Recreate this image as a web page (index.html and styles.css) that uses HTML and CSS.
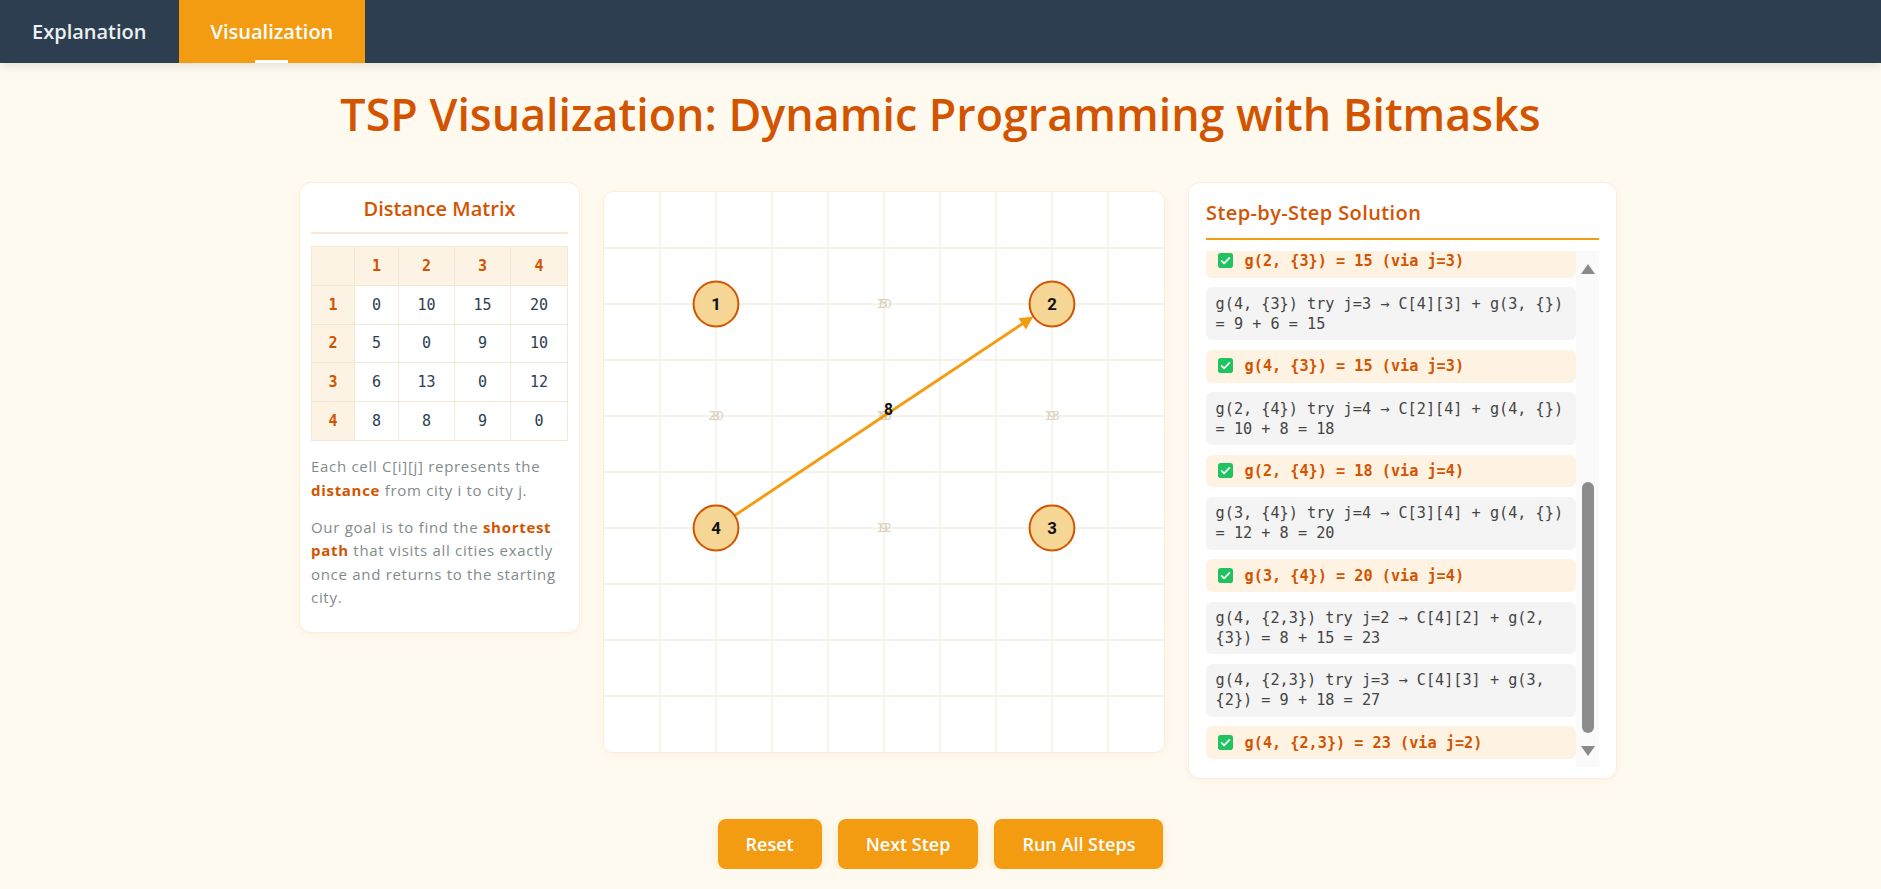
FILE: index.html
```html
<!DOCTYPE html>
<html lang="en">
<head>
<meta charset="utf-8">
<title>TSP Visualization</title>
<link rel="stylesheet" href="styles.css">
</head>
<body>
<nav class="nav">
  <div class="tab">Explanation</div>
  <div class="tab active">Visualization</div>
</nav>

<h1 class="title">TSP Visualization: Dynamic Programming with Bitmasks</h1>

<main class="row">
  <section class="card matrix-card">
    <h3 class="card-title">Distance Matrix</h3>
    <table class="matrix">
      <tr><th></th><th>1</th><th>2</th><th>3</th><th>4</th></tr>
      <tr><th>1</th><td>0</td><td>10</td><td>15</td><td>20</td></tr>
      <tr><th>2</th><td>5</td><td>0</td><td>9</td><td>10</td></tr>
      <tr><th>3</th><td>6</td><td>13</td><td>0</td><td>12</td></tr>
      <tr><th>4</th><td>8</td><td>8</td><td>9</td><td>0</td></tr>
    </table>
    <p class="note">Each cell C[i][j] represents the <strong>distance</strong> from city i to city j.</p>
    <p class="note last">Our goal is to find the <strong>shortest path</strong> that visits all cities exactly once and returns to the starting city.</p>
  </section>

  <section class="card board-card">
    <svg class="board" viewBox="0 0 500 500" width="560" height="560">
      <g class="grid">
        <line x1="50" y1="0" x2="50" y2="500"/><line x1="100" y1="0" x2="100" y2="500"/>
        <line x1="150" y1="0" x2="150" y2="500"/><line x1="200" y1="0" x2="200" y2="500"/>
        <line x1="250" y1="0" x2="250" y2="500"/><line x1="300" y1="0" x2="300" y2="500"/>
        <line x1="350" y1="0" x2="350" y2="500"/><line x1="400" y1="0" x2="400" y2="500"/>
        <line x1="450" y1="0" x2="450" y2="500"/>
        <line x1="0" y1="50" x2="500" y2="50"/><line x1="0" y1="100" x2="500" y2="100"/>
        <line x1="0" y1="150" x2="500" y2="150"/><line x1="0" y1="200" x2="500" y2="200"/>
        <line x1="0" y1="250" x2="500" y2="250"/><line x1="0" y1="300" x2="500" y2="300"/>
        <line x1="0" y1="350" x2="500" y2="350"/><line x1="0" y1="400" x2="500" y2="400"/>
        <line x1="0" y1="450" x2="500" y2="450"/>
      </g>
      <g class="weights">
        <text x="250" y="100">10</text><text x="250" y="100">5</text>
        <text x="100" y="200">20</text><text x="100" y="200">8</text>
        <text x="400" y="200">9</text><text x="400" y="200">13</text>
        <text x="250" y="300">12</text><text x="250" y="300">9</text>
        <text x="250" y="200">15</text><text x="250" y="200">6</text>
        <text x="250" y="200">10</text><text x="250" y="200">8</text>
      </g>
      <line class="edge" x1="116.6" y1="288.9" x2="376" y2="116"/>
      <polygon class="edge-head" points="383.4,111.1 376.7,122.8 370.1,112.8"/>
      <text class="edge-label" x="254" y="194">8</text>
      <g class="nodes">
        <circle cx="100" cy="100" r="20"/><text x="100" y="100">1</text>
        <circle cx="400" cy="100" r="20"/><text x="400" y="100">2</text>
        <circle cx="400" cy="300" r="20"/><text x="400" y="300">3</text>
        <circle cx="100" cy="300" r="20"/><text x="100" y="300">4</text>
      </g>
    </svg>
  </section>

  <section class="card steps-card">
    <h3 class="card-title steps-title">Step-by-Step Solution</h3>
    <div class="scroll">
      <div class="list">
        <div class="list-inner">
          <div class="step result"><span class="check"><svg viewBox="0 0 16 16" width="15" height="15"><rect width="16" height="16" rx="3" fill="#1fc35f"/><path d="M3.8 8.3l2.7 2.7 5.7-5.8" fill="none" stroke="#fff" stroke-width="1.8" stroke-linecap="round" stroke-linejoin="round"/></svg></span>g(2, {3}) = 15 (via j=3)</div>
          <div class="step calc">g(4, {3}) try j=3 → C[4][3] + g(3, {}) = 9 + 6 = 15</div>
          <div class="step result"><span class="check"><svg viewBox="0 0 16 16" width="15" height="15"><rect width="16" height="16" rx="3" fill="#1fc35f"/><path d="M3.8 8.3l2.7 2.7 5.7-5.8" fill="none" stroke="#fff" stroke-width="1.8" stroke-linecap="round" stroke-linejoin="round"/></svg></span>g(4, {3}) = 15 (via j=3)</div>
          <div class="step calc">g(2, {4}) try j=4 → C[2][4] + g(4, {}) = 10 + 8 = 18</div>
          <div class="step result"><span class="check"><svg viewBox="0 0 16 16" width="15" height="15"><rect width="16" height="16" rx="3" fill="#1fc35f"/><path d="M3.8 8.3l2.7 2.7 5.7-5.8" fill="none" stroke="#fff" stroke-width="1.8" stroke-linecap="round" stroke-linejoin="round"/></svg></span>g(2, {4}) = 18 (via j=4)</div>
          <div class="step calc">g(3, {4}) try j=4 → C[3][4] + g(4, {}) = 12 + 8 = 20</div>
          <div class="step result"><span class="check"><svg viewBox="0 0 16 16" width="15" height="15"><rect width="16" height="16" rx="3" fill="#1fc35f"/><path d="M3.8 8.3l2.7 2.7 5.7-5.8" fill="none" stroke="#fff" stroke-width="1.8" stroke-linecap="round" stroke-linejoin="round"/></svg></span>g(3, {4}) = 20 (via j=4)</div>
          <div class="step calc">g(4, {2,3}) try j=2 → C[4][2] + g(2, {3}) = 8 + 15 = 23</div>
          <div class="step calc">g(4, {2,3}) try j=3 → C[4][3] + g(3, {2}) = 9 + 18 = 27</div>
          <div class="step result"><span class="check"><svg viewBox="0 0 16 16" width="15" height="15"><rect width="16" height="16" rx="3" fill="#1fc35f"/><path d="M3.8 8.3l2.7 2.7 5.7-5.8" fill="none" stroke="#fff" stroke-width="1.8" stroke-linecap="round" stroke-linejoin="round"/></svg></span>g(4, {2,3}) = 23 (via j=2)</div>
        </div>
      </div>
      <div class="sbar">
        <div class="arrow-up"></div>
        <div class="thumb"></div>
        <div class="arrow-down"></div>
      </div>
    </div>
  </section>
</main>

<div class="actions">
  <button class="btn">Reset</button>
  <button class="btn">Next Step</button>
  <button class="btn">Run All Steps</button>
</div>
</body>
</html>
```

FILE: styles.css
```css
* { box-sizing: border-box; }

body {
  margin: 0;
  background: #fffaf0;
  font-family: "Open Sans", "Noto Sans", sans-serif;
  color: #2c3e50;
}

.nav {
  display: flex;
  height: 63px;
  background: #2c3e50;
  box-shadow: 0 2px 10px rgba(0, 0, 0, 0.12);
}

.tab {
  display: flex;
  align-items: center;
  padding: 0 32px;
  color: #ecf0f1;
  font-size: 20px;
  font-weight: 600;
}

.tab.active {
  position: relative;
  background: #f39c12;
  color: #fff;
}

.tab.active::after {
  content: "";
  position: absolute;
  left: 50%;
  bottom: 0;
  width: 33px;
  height: 3px;
  margin-left: -16.5px;
  background: #fff;
}

.title {
  margin: 24px 0 41px;
  text-align: center;
  color: #d35400;
  font-size: 44.8px;
  line-height: 54px;
  font-weight: 600;
}

.row {
  display: flex;
  justify-content: center;
  align-items: flex-start;
  gap: 23px;
  padding-left: 35px;
}

.card {
  background: #fff;
  border: 1px solid #fbeedb;
  border-radius: 12px;
  box-shadow: 0 2px 8px rgba(211, 84, 0, 0.06);
}

.matrix-card {
  width: 281px;
  padding: 11px;
}

.card-title {
  margin: 0;
  padding-bottom: 8px;
  border-bottom: 2px solid #f6e8d5;
  text-align: center;
  color: #d35400;
  font-size: 20px;
  line-height: 30px;
  font-weight: 600;
}

.matrix {
  margin-top: 12px;
  width: 256px;
  border-collapse: collapse;
  table-layout: fixed;
  font-family: "DejaVu Sans Mono", "Liberation Mono", monospace;
  font-size: 15px;
}

.matrix th,
.matrix td {
  height: 38.8px;
  padding: 0;
  border: 1px solid #f4e7d4;
  text-align: center;
}

.matrix td { color: #2c3e50; }

.matrix th {
  background: #fdf3e4;
  color: #d35400;
  font-weight: bold;
}

.matrix tr:first-child th:nth-child(1) { width: 43px; }
.matrix tr:first-child th:nth-child(2) { width: 44px; }
.matrix tr:first-child th:nth-child(3) { width: 56px; }
.matrix tr:first-child th:nth-child(4) { width: 56px; }
.matrix tr:first-child th:nth-child(5) { width: 57px; }

.note {
  margin: 14.4px 0;
  color: #7f8c8d;
  font-size: 15px;
  line-height: 23.2px;
  letter-spacing: 0.7px;
}

.note.last { margin-bottom: 12px; }

.note strong {
  color: #d35400;
  font-weight: 700;
}

.board-card {
  margin-top: 9px;
  border-radius: 10px;
  overflow: hidden;
}

.board { display: block; }

.grid line {
  stroke: #f5eee2;
  stroke-width: 1.2;
}

.weights text {
  font-family: "DejaVu Sans", sans-serif;
  font-size: 11px;
  fill: #ddd2bc;
  text-anchor: middle;
  dominant-baseline: central;
}

.edge {
  stroke: #f39c12;
  stroke-width: 2.6;
}

.edge-head { fill: #f39c12; }

.edge-label {
  font-family: "Roboto", "DejaVu Sans", sans-serif;
  font-size: 14px;
  font-weight: 700;
  fill: #111;
  text-anchor: middle;
  dominant-baseline: central;
}

.nodes circle {
  fill: #f6d694;
  stroke: #d35400;
  stroke-width: 1.8;
}

.nodes text {
  font-family: "Roboto", "DejaVu Sans", sans-serif;
  font-size: 15px;
  font-weight: 700;
  fill: #111;
  text-anchor: middle;
  dominant-baseline: central;
}

.steps-card {
  width: 429px;
  padding: 15px 17px 11px;
}

.steps-title {
  padding-bottom: 10px;
  margin-bottom: 11px;
  border-bottom-color: #f39c12;
  text-align: left;
  letter-spacing: 0.4px;
}

.scroll {
  display: flex;
  height: 516px;
}

.list {
  flex: 1;
  overflow: hidden;
}

.list-inner { margin-top: -6px; }

.step {
  margin-bottom: 9.6px;
  padding: 6.4px 9.6px;
  border-radius: 6px;
  font-family: "DejaVu Sans Mono", "Liberation Mono", monospace;
  font-size: 15.2px;
  line-height: 20px;
}

.step.calc {
  background: #f4f4f4;
  color: #444;
}

.step.result {
  background: #fef3e2;
  color: #d35400;
  font-weight: bold;
}

.check {
  display: inline-block;
  width: 15px;
  height: 15px;
  margin: 0 12px 0 2px;
  vertical-align: -2px;
}

.check svg { display: block; }

.sbar {
  width: 23px;
  background: #fafafa;
  display: flex;
  flex-direction: column;
  align-items: center;
}

.arrow-up {
  margin-top: 13px;
  width: 0;
  height: 0;
  border-left: 7px solid transparent;
  border-right: 7px solid transparent;
  border-bottom: 10px solid #8a8a8a;
}

.thumb {
  margin-top: 208px;
  width: 12px;
  height: 251px;
  border-radius: 6px;
  background: #8c8c8c;
}

.arrow-down {
  margin-top: 13px;
  width: 0;
  height: 0;
  border-left: 7px solid transparent;
  border-right: 7px solid transparent;
  border-top: 10px solid #8a8a8a;
}

.actions {
  display: flex;
  justify-content: center;
  gap: 16px;
  margin-top: 40px;
}

.btn {
  height: 50px;
  padding: 0 28px;
  border: none;
  border-radius: 8px;
  background: #f39c12;
  color: #fff;
  font-family: inherit;
  font-size: 18px;
  font-weight: 600;
  box-shadow: 0 4px 10px rgba(243, 156, 18, 0.22);
}
```
